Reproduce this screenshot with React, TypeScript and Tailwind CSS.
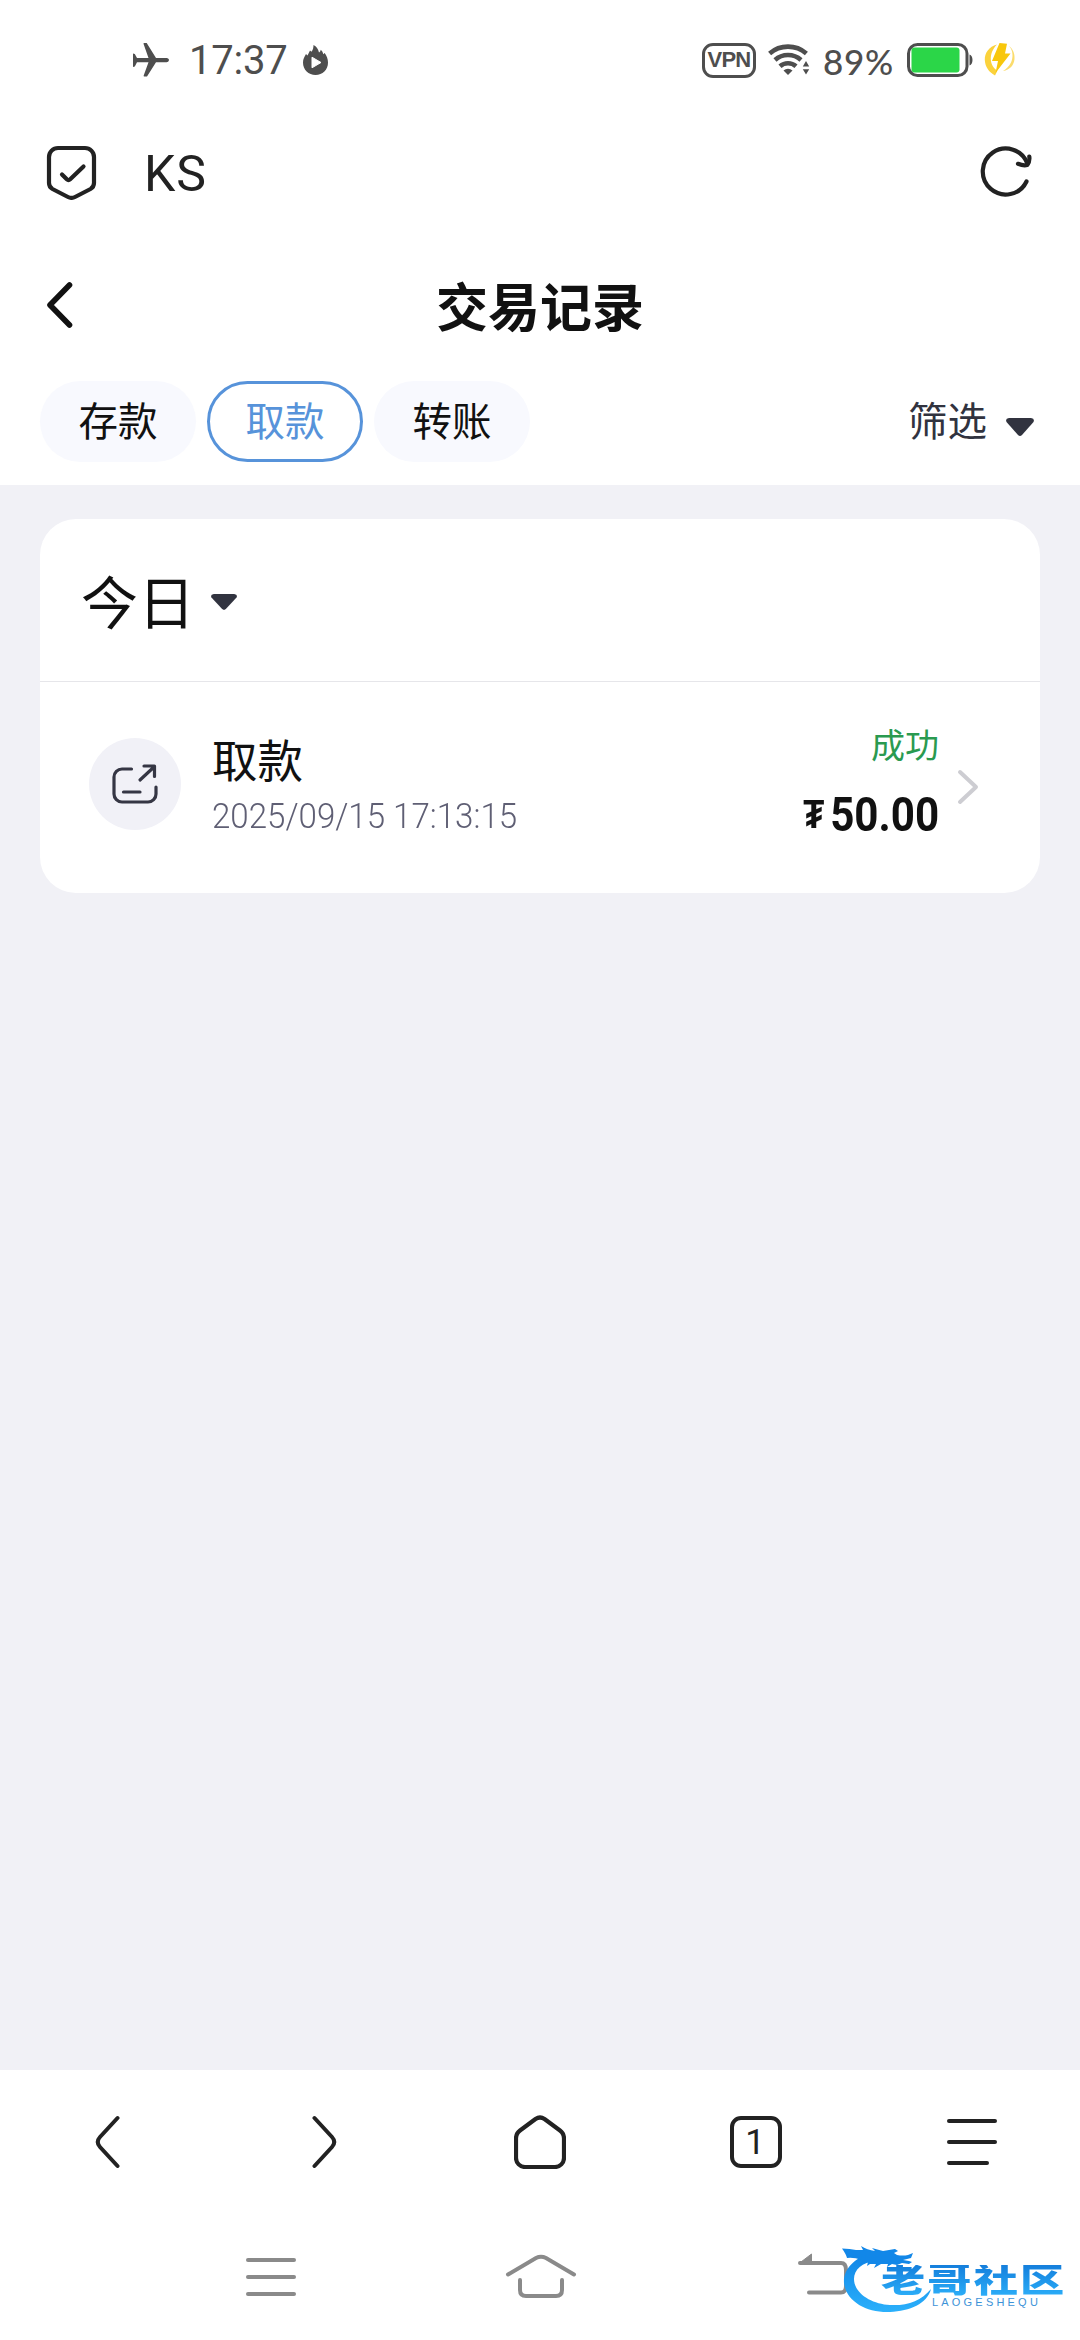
import React, { useState } from 'react';
import clsx from 'clsx';

interface Transaction {
  id: string;
  title: string;
  time: string;
  status: string;
  amount: string;
}

const tabs = ['存款', '取款', '转账'];

const transactions: Transaction[] = [
  { id: '1', title: '取款', time: '2025/09/15 17:13:15', status: '成功', amount: '50.00' },
];

const StatusBar: React.FC = () => (
  <div className="flex h-[120px] items-center pl-[132px] pr-[63px] text-[#4e4e4e]">
    <svg width="38" height="34" viewBox="0 0 38 34" fill="currentColor">
      <path d="M1 10.500l1.800.5 2.200 4.100h11.500L11.500.800c-.2-.6.300-.8 1-.8h2.200L24 15.100h10.500c3.300 0 3.300 4.200 0 4.200H24L15 33.500h-2.300c-.800 0-1.300-.3-1-1l4.800-13.200H5l-2.200 4.200-1.800.4z" />
    </svg>
    <span className="ml-[19px] w-[98px] whitespace-nowrap pt-px text-[40px] leading-none tracking-[-0.2px]">17:37</span>
    <svg className="ml-[15px]" width="27" height="32" viewBox="0 0 27 32">
      <path
        d="M11.500 1c3 1.500 4.700 4 5.500 7.500 1-.6 1.500-1.500 1.700-2.800 1.500 1.300 2.300 2.800 2.500 4.600l1.500-1.300c2 3 3.300 6 3.300 9.500C26 26 20.500 31 13.500 31S1 26 1 18.500C1 15 2.500 12.500 4 10l1.500 1.500L8 6.500l1.500 1.300C11 6 11.500 3.500 11.500 1z"
        fill="currentColor"
      />
      <path d="M10 13.200v10.600l9-5.300z" fill="#fff" stroke="#fff" strokeLinejoin="round" />
    </svg>

    <div className="ml-auto flex items-center">
      <div className="flex h-[35px] w-[54px] items-center justify-center rounded-[11px] border-[3px] border-[#4e4e4e] font-['Liberation_Sans'] text-[22px] font-bold leading-none tracking-[-0.8px]">
        VPN
      </div>
      <svg className="ml-[12px]" width="42" height="32" viewBox="0 0 42 32">
        <g fill="none" stroke="currentColor" strokeWidth="4.600">
          <path d="M1.600 9.500a28 28 0 0 1 36.800 0" />
          <path d="M7 16a19.500 19.500 0 0 1 26 0" />
          <path d="M12 22.300a12 12 0 0 1 16 0" />
        </g>
        <path d="M15.500 26.500a7 7 0 0 1 9 0L20 31z" fill="currentColor" />
        <path d="M33 24.500L38 14.500l5 10z" fill="#fff" />
        <path d="M34.800 22.500h6.400l-3.200-5.500zM34.800 25.200h6.400L38 30.500z" fill="currentColor" />
      </svg>
      <span className="ml-[13px] w-[73px] whitespace-nowrap pt-[2px] font-['Lato'] text-[35px] font-medium leading-none tracking-[0.7px]">89%</span>
      <svg className="ml-[11px]" width="68" height="34" viewBox="0 0 68 34">
        <rect x="1.500" y="1.500" width="58.500" height="31" rx="9" fill="none" stroke="currentColor" strokeWidth="3" />
        <rect x="4.500" y="4.500" width="48" height="25" rx="3" fill="#2bd648" />
        <path d="M62.500 11.500c4 1 4 10 0 11z" fill="currentColor" />
      </svg>
      <svg className="ml-[9px]" width="33" height="36" viewBox="0 0 33 36">
        <path d="M13 2.500C5 4.500.500 11 .800 18c.4 7 4 12 10.200 15.500l2.500-5C6 25 3.500 12 13 2.500z" fill="#fbd23c" />
        <path d="M25 4c4 4 4.500 11 2 16.500-2 4-5 6.500-8 8.500 7-1 11-6 11.500-12C31 11 28.500 6.500 25 4z" fill="#fbdc6c" />
        <path d="M15.500 1l7.500.8-2 9.700h5.500L11.500 31l2.500-12H8z" fill="#f8c70c" />
      </svg>
    </div>
  </div>
);

const AddressBar: React.FC = () => (
  <div className="flex h-[104px] items-center pl-[46px] pr-[48px] text-[#222]">
    <svg width="51" height="55" viewBox="0 0 51 55" fill="none" stroke="currentColor" strokeWidth="4.200" strokeLinecap="round" strokeLinejoin="round">
      <path d="M12 3h27a9 9 0 0 1 9 9v26q0 4-3.500 6L29 52q-3.500 1.800-7 0L6.500 44Q3 42 3 38V12a9 9 0 0 1 9-9z" />
      <path d="M16 29.500l4.800 4.800q1.700 1.600 3.400 0L37.500 21.500" />
    </svg>
    <span className="ml-[47px] pt-[3px] text-[50px] leading-none tracking-[0.8px]">KS</span>
    <svg className="ml-auto" width="52" height="52" viewBox="0 0 52 52" fill="none" stroke="currentColor" strokeWidth="4.200" strokeLinecap="round" strokeLinejoin="round">
      <path d="M46.500 35.500A23 23 0 1 1 47.500 18" />
      <path d="M38 17.800q5.500 2.200 9.200 1.200Q50 16 49.300 10.500" />
    </svg>
  </div>
);

const Caret: React.FC<{ className?: string; width: number; height: number }> = ({ className, width, height }) => (
  <svg className={className} width={width} height={height} viewBox="0 0 28 18" preserveAspectRatio="none">
    <path d="M3 0h22q4 .5 2.500 4L16 17q-2 1.800-4 0L.500 4Q-1 .5 3 0z" fill="#31333f" />
  </svg>
);

const TransactionRow: React.FC<{ item: Transaction }> = ({ item }) => (
  <div className="flex h-[211px] pl-[49px] pr-[61px]">
    <div className="mt-[56px] flex h-[92px] w-[92px] items-center justify-center rounded-full bg-[#f1f1f7]">
      <svg width="46" height="40" viewBox="0 0 46 40" fill="none" stroke="#353644" strokeWidth="3.200" strokeLinecap="round" strokeLinejoin="round">
        <path d="M19.500 5H10a8 8 0 0 0-8 8v17a8 8 0 0 0 8 8h26a8 8 0 0 0 8-8v-7" />
        <path d="M11.500 28H28" />
        <path d="M28 16L42.500 2.500M32 2h10.500v10.500" />
      </svg>
    </div>
    <div className="ml-[31px] flex flex-col">
      <span className="mt-[58px] text-[45.5px] leading-[46px] text-[#111]">{item.title}</span>
      <span className="mt-[11px] origin-left scale-x-[0.945] whitespace-nowrap text-[35px] font-light leading-[40px] text-[#5f5f74]">
        {item.time}
      </span>
    </div>
    <div className="ml-auto flex flex-col items-end">
      <span className="mt-[46px] text-[34px] leading-[36px] text-[#2a9a50]">{item.status}</span>
      <div className="mt-[23px] flex origin-right scale-x-[0.86] items-center font-bold leading-[56px] text-[#111]">
        <span className="text-[40px]">₮</span>
        <span className="ml-[7px] text-[49px]">{item.amount}</span>
      </div>
    </div>
    <svg className="ml-[18px] mt-[87px]" width="22" height="36" viewBox="0 0 22 36" fill="none" stroke="#cdcdd2" strokeWidth="4" strokeLinecap="round" strokeLinejoin="round">
      <path d="M3 3l16 15L3 33" />
    </svg>
  </div>
);

const BrowserBar: React.FC = () => (
  <div className="grid h-[144px] grid-cols-5 place-items-center text-[#222]">
    <svg width="28" height="56" viewBox="0 0 28 56" fill="none" stroke="currentColor" strokeWidth="4" strokeLinecap="round">
      <path d="M23.500 4L6 23q-4.500 5 0 10l17.500 19" />
    </svg>
    <svg width="28" height="56" viewBox="0 0 28 56" fill="none" stroke="currentColor" strokeWidth="4" strokeLinecap="round">
      <path d="M4.500 4L22 23q4.500 5 0 10L4.500 52" />
    </svg>
    <svg width="52" height="54" viewBox="0 0 52 54" fill="none" stroke="currentColor" strokeWidth="4.200" strokeLinejoin="round">
      <path d="M21.500 4q4.500-3 9 0L46 15.500q4 3 4 8V43a9 9 0 0 1-9 9H11a9 9 0 0 1-9-9V23.500q0-5 4-8z" />
    </svg>
    <div className="flex h-[52px] w-[52px] items-center justify-center rounded-[11px] border-4 border-[#222] pr-[2px] pt-px text-[35px] leading-none">
      1
    </div>
    <div className="flex h-[46px] w-[50px] flex-col justify-between">
      <span className="h-1 rounded-full bg-[#222]" />
      <span className="h-1 rounded-full bg-[#222]" />
      <span className="h-1 w-[42px] rounded-full bg-[#222]" />
    </div>
  </div>
);

const SystemNav: React.FC = () => (
  <div className="relative flex h-[126px] pl-[246px] text-[#8a8a8a]">
    <div className="mt-[44px] flex h-[38px] w-[50px] flex-col justify-between">
      <span className="h-1 rounded-full bg-[#8a8a8a]" />
      <span className="h-1 rounded-full bg-[#8a8a8a]" />
      <span className="h-1 rounded-full bg-[#8a8a8a]" />
    </div>
    <svg className="ml-[209px] mt-[40px]" width="72" height="46" viewBox="0 0 72 46" fill="none" stroke="currentColor" strokeWidth="4" strokeLinecap="round">
      <path d="M3 20.500L31 4q5-2.500 10 0l28 16.500" />
      <path d="M15 26v10q0 6 6 6h30q6 0 6-6V26" />
    </svg>
    <svg className="ml-[220px] mt-[38px]" width="54" height="48" viewBox="0 0 54 48">
      <path d="M3 11h41q5 0 5 7v16q0 6.500-5 6.500H12" fill="none" stroke="currentColor" strokeWidth="4" strokeLinecap="round" />
      <path d="M2 11.500L14.500 2v9.500z" fill="currentColor" stroke="currentColor" strokeLinejoin="round" />
    </svg>

    {/* Community logo floating over the back key */}
    <div className="absolute left-[840px] top-[26px] h-[76px] w-[230px]">
      <svg className="absolute left-0 top-0" width="100" height="76" viewBox="0 0 100 76">
        <defs>
          <linearGradient id="dragon" x1="0" y1="0" x2="0" y2="1">
            <stop offset="0" stopColor="#0f84e6" />
            <stop offset="1" stopColor="#2bb0fb" />
          </linearGradient>
        </defs>
        <path d="M36 13C16 15 3 29 4 43c2 18 22 30 46 29 20-1 37-8 41-23-10 12-24 17-41 16-19-1-36-12-36-26 0-9 8-17 22-18z" fill="url(#dragon)" />
        <path
          d="M2 8.500q8 0 14 1.500l7 0-2-4q6 4 14 5l-3-3q7 2 11 3l12-2 3 2-4 2 3 2q6 1 11 0l5-2-2 5-8 2 6 1 3 1-3 2-7-1-5 2-5-1-5 3 1-3-7 0-7 4 2-4-6 0-3 2 1-4q-5 1-9 4l3-6q-9-3-15-2Q6 14 2 8.500z"
          fill="#1287e8"
        />
      </svg>
      <span className="absolute left-[41px] top-[25px] origin-left scale-x-[1.34] whitespace-nowrap bg-gradient-to-b from-[#157fdc] to-[#2badf8] bg-clip-text text-[33px] font-black leading-[31px] tracking-[1.6px] text-transparent">
        老哥社区
      </span>
      <span className="absolute left-[92px] top-[56px] font-['Liberation_Sans'] text-[11px] leading-[12px] tracking-[3.2px] text-[#3d93d8]">LAOGESHEQU</span>
    </div>
  </div>
);

const App: React.FC = () => {
  const [activeTab, setActiveTab] = useState('取款');

  return (
    <div className="flex h-[2340px] w-[1080px] flex-col overflow-hidden bg-white font-['Roboto','Noto_Sans_CJK_SC',sans-serif]">
      <StatusBar />
      <AddressBar />

      <div className="grid h-[157px] grid-cols-[1fr_auto_1fr] items-center px-[46px] text-[#111]">
        <svg className="mt-[4px]" width="28" height="50" viewBox="0 0 28 50" fill="none" stroke="currentColor" strokeWidth="5.600" strokeLinecap="round" strokeLinejoin="round">
          <path d="M23.500 5L4 25l19.500 20" />
        </svg>
        <h1 className="pt-[15px] text-[52px] font-bold leading-none">交易记录</h1>
      </div>

      <div className="flex h-[104px] items-start pl-[40px] pr-[46px]">
        <div className="flex gap-[11px]">
          {tabs.map(tab => (
            <button
              key={tab}
              onClick={() => setActiveTab(tab)}
              className={clsx(
                'h-[81px] w-[156px] rounded-full pt-[2px] text-[39.5px] leading-none',
                tab === activeTab ? 'border-[3px] border-[#5793da] text-[#5793da]' : 'bg-[#f8f9fe] text-[#111]'
              )}
            >
              {tab}
            </button>
          ))}
        </div>
        <button className="ml-auto flex h-[81px] items-center pt-[2px] text-[39.5px] leading-none text-[#31333f]">
          筛选
          <Caret className="ml-[19px] mt-[8px]" width={28} height={18} />
        </button>
      </div>

      <main className="flex-1 bg-[#f1f1f6] px-[40px] pt-[34px]">
        <section className="h-[374px] overflow-hidden rounded-[36px] bg-white">
          <div className="flex h-[163px] items-center border-b border-[#e6e6ea] pl-[41px]">
            <span className="pt-[9px] text-[57px] leading-none text-[#111]">今日</span>
            <Caret className="ml-[16px] mt-[3px]" width={26} height={16} />
          </div>
          {transactions.map(item => (
            <TransactionRow key={item.id} item={item} />
          ))}
        </section>
      </main>

      <BrowserBar />
      <SystemNav />
    </div>
  );
};

export default App;
